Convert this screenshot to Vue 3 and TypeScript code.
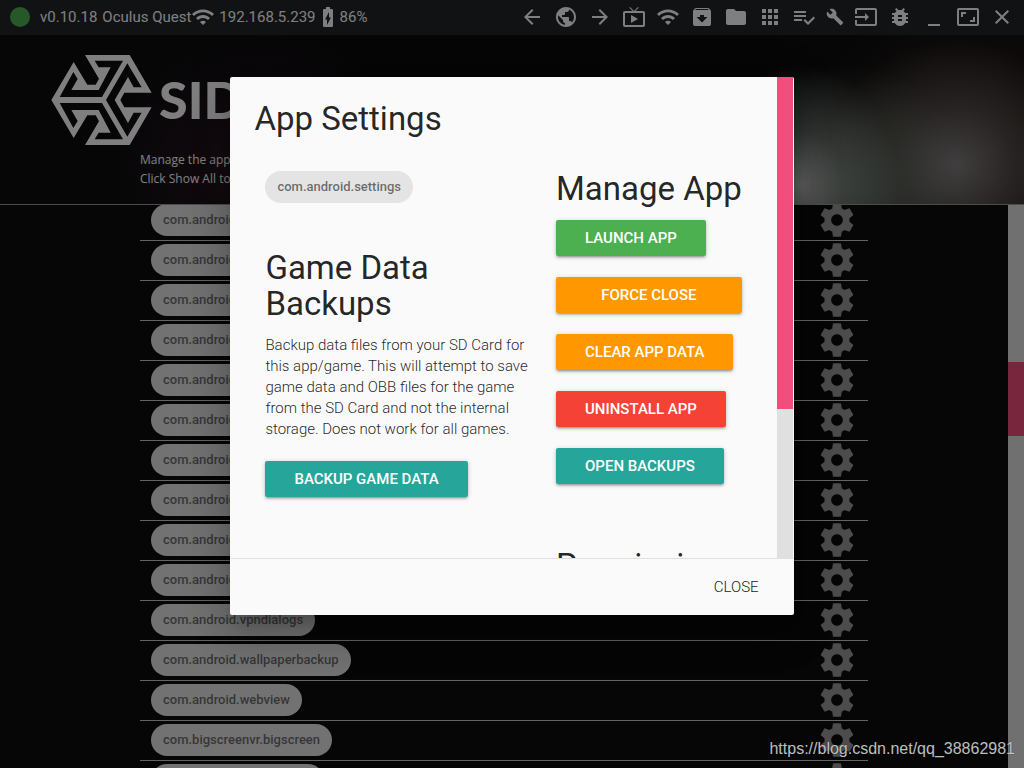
<script setup lang="ts">
interface BarIcon {
  name: string
  path: string
  small?: boolean
}
interface Action {
  label: string
  tone: string
  wide?: boolean
}

const wifi =
  'M1 9l2 2c4.97-4.97 13.03-4.97 18 0l2-2C16.93 2.93 7.08 2.93 1 9zm8 8l3 3 3-3c-1.65-1.66-4.34-1.66-6 0zm-4-4l2 2c2.76-2.76 7.24-2.76 10 0l2-2C15.14 9.14 8.87 9.14 5 13z'
const battery =
  'M15.67 4H14V2h-4v2H8.33C7.6 4 7 4.6 7 5.33v15.33C7 21.4 7.6 22 8.33 22h7.33c.74 0 1.34-.6 1.34-1.33V5.33C17 4.6 16.4 4 15.67 4zM11 20v-5.5H9L13 7v5.5h2L11 20z'
const gear =
  'M19.43 12.98c.04-.32.07-.64.07-.98s-.03-.66-.07-.98l2.11-1.65c.19-.15.24-.42.12-.64l-2-3.46c-.12-.22-.39-.3-.61-.22l-2.49 1c-.52-.4-1.08-.73-1.69-.98l-.38-2.65C14.46 2.18 14.25 2 14 2h-4c-.25 0-.46.18-.49.42l-.38 2.65c-.61.25-1.17.59-1.69.98l-2.49-1c-.23-.09-.49 0-.61.22l-2 3.46c-.13.22-.07.49.12.64l2.11 1.65c-.04.32-.07.65-.07.98s.03.66.07.98l-2.11 1.65c-.19.15-.24.42-.12.64l2 3.46c.12.22.39.3.61.22l2.49-1c.52.4 1.08.73 1.69.98l.38 2.65c.03.24.24.42.49.42h4c.25 0 .46-.18.49-.42l.38-2.65c.61-.25 1.17-.59 1.69-.98l2.49 1c.23.09.49 0 .61-.22l2-3.46c.12-.22.07-.49-.12-.64l-2.11-1.65zM12 15.5c-1.93 0-3.5-1.57-3.5-3.5s1.57-3.5 3.5-3.5 3.5 1.57 3.5 3.5-1.57 3.5-3.5 3.5z'

const barIcons: BarIcon[] = [
  { name: 'Back', path: 'M20 11H7.83l5.59-5.59L12 4l-8 8 8 8 1.41-1.41L7.83 13H20v-2z' },
  {
    name: 'Home',
    path: 'M12 2C6.48 2 2 6.48 2 12s4.48 10 10 10 10-4.48 10-10S17.52 2 12 2zm-1 17.93c-3.95-.49-7-3.85-7-7.93 0-.62.08-1.21.21-1.79L9 15v1c0 1.1.9 2 2 2v1.93zm6.9-2.54c-.26-.81-1-1.39-1.9-1.39h-1v-3c0-.55-.45-1-1-1H8v-2h2c.55 0 1-.45 1-1V7h2c1.1 0 2-.9 2-2v-.41c2.93 1.19 5 4.06 5 7.41 0 2.08-.8 3.97-2.1 5.39z',
  },
  { name: 'Forward', path: 'M12 4l-1.41 1.41L16.17 11H4v2h12.17l-5.58 5.59L12 20l8-8z' },
  {
    name: 'Stream',
    path: 'M21 6h-7.59l3.29-3.29L16 2l-4 4-4-4-.71.71L10.59 6H3c-1.1 0-2 .89-2 2v12c0 1.1.9 2 2 2h18c1.1 0 2-.9 2-2V8c0-1.11-.9-2-2-2zm0 14H3V8h18v12zM9 10v8l7-4z',
  },
  { name: 'Wireless', path: wifi },
  {
    name: 'Backups',
    path: 'M20.54 5.23l-1.39-1.68C18.88 3.21 18.47 3 18 3H6c-.47 0-.88.21-1.16.55L3.46 5.23C3.17 5.57 3 6.02 3 6.5V19c0 1.1.9 2 2 2h14c1.1 0 2-.9 2-2V6.5c0-.48-.17-.93-.46-1.27zM12 17.5L6.5 12H10v-2h4v2h3.5L12 17.5zM5.12 5l.81-1h12l.94 1H5.12z',
  },
  {
    name: 'Files',
    path: 'M10 4H4c-1.1 0-1.99.9-1.99 2L2 18c0 1.1.9 2 2 2h16c1.1 0 2-.9 2-2V8c0-1.1-.9-2-2-2h-8l-2-2z',
  },
  {
    name: 'Apps',
    path: 'M4 8h4V4H4v4zm6 12h4v-4h-4v4zm-6 0h4v-4H4v4zm0-6h4v-4H4v4zm6 0h4v-4h-4v4zm6-10v4h4V4h-4zm-6 4h4V4h-4v4zm6 6h4v-4h-4v4zm0 6h4v-4h-4v4z',
  },
  {
    name: 'Tasks',
    path: 'M14 10H2v2h12v-2zm0-4H2v2h12V6zM2 16h8v-2H2v2zm19.5-4.5L23 13l-6.99 7-4.51-4.5L13 14l3.01 3 5.49-5.5z',
  },
  {
    name: 'Tools',
    small: true,
    path: 'M22.7 19l-9.1-9.1c.9-2.3.4-5-1.5-6.9-2-2-5-2.4-7.4-1.3L9 6 6 9 1.6 4.7C.4 7.1.9 10.1 2.9 12.1c1.9 1.9 4.6 2.4 6.9 1.5l9.1 9.1c.4.4 1 .4 1.4 0l2.3-2.3c.5-.4.5-1.1.1-1.4z',
  },
  {
    name: 'Import',
    path: 'M21 3.01H3c-1.1 0-2 .9-2 2V9h2V4.99h18v14.03H3V15H1v4.01c0 1.1.9 1.98 2 1.98h18c1.1 0 2-.88 2-1.98v-14c0-1.11-.9-2-2-2zM11 16l4-4-4-4v3H1v2h10v3z',
  },
  {
    name: 'Debug',
    path: 'M20 8h-2.81c-.45-.78-1.07-1.45-1.82-1.96L17 4.41 15.59 3l-2.17 2.17C12.96 5.06 12.49 5 12 5c-.49 0-.96.06-1.41.17L8.41 3 7 4.41l1.62 1.63C7.88 6.55 7.26 7.22 6.81 8H4v2h2.09c-.05.33-.09.66-.09 1v1H4v2h2v1c0 .34.04.67.09 1H4v2h2.81c1.04 1.79 2.97 3 5.19 3s4.15-1.21 5.19-3H20v-2h-2.09c.05-.33.09-.66.09-1v-1h2v-2h-2v-1c0-.34-.04-.67-.09-1H20V8zm-6 8h-4v-2h4v2zm0-4h-4v-2h4v2z',
  },
  { name: 'Minimize', path: 'M6 19h12v2H6z' },
  {
    name: 'Maximize',
    path: 'M19 12h-2v3h-3v2h5v-5zM7 9h3V7H5v5h2V9zm14-6H3c-1.1 0-2 .9-2 2v14c0 1.1.9 2 2 2h18c1.1 0 2-.9 2-2V5c0-1.1-.9-2-2-2zm0 16.01H3V4.99h18v14.02z',
  },
  {
    name: 'Close window',
    path: 'M19 6.41L17.59 5 12 10.59 6.41 5 5 6.41 10.59 12 5 17.59 6.41 19 12 13.41 17.59 19 19 17.59 13.41 12z',
  },
]

const packages: string[] = [
  ...Array<string>(10).fill('com.android.settings'),
  'com.android.vpndialogs',
  'com.android.wallpaperbackup',
  'com.android.webview',
  'com.bigscreenvr.bigscreen',
  'com.android.settings.app',
]

const actions: Action[] = [
  { label: 'Launch App', tone: 'green' },
  { label: 'Force Close', tone: 'orange', wide: true },
  { label: 'Clear App Data', tone: 'orange' },
  { label: 'Uninstall App', tone: 'red' },
  { label: 'Open Backups', tone: 'teal' },
]
</script>

<template>
  <div class="shell">
    <header class="bar">
      <div class="status">
        <span class="dot"></span>
        <span class="version">v0.10.18</span>
        <span>Oculus Quest</span>
        <svg class="icon" viewBox="0 0 24 24"><path :d="wifi" /></svg>
        <span class="address">192.168.5.239</span>
        <svg class="icon" viewBox="0 0 24 24"><path :d="battery" /></svg>
        <span>86%</span>
      </div>
      <nav class="tools">
        <button v-for="i in barIcons" :key="i.name" type="button" class="tool" :aria-label="i.name">
          <svg class="icon" :class="{ small: i.small }" viewBox="0 0 24 24"><path :d="i.path" /></svg>
        </button>
      </nav>
    </header>

    <section class="hero">
      <div class="brand">
        <svg class="mark" viewBox="9 9 301 270">
          <path
            fill-rule="evenodd"
            d="M9 144L76 30 117 98H142L152 80 110 9H244L310 122H228L216 144 228 166H310L244 279H110L152 208 142 190H117L76 258Z
               M34 135H161L224 26H139L151 46H187L151 114H69L88 81 75 60Z
               M34 153H161L224 262H139L151 242H187L151 174H69L88 207 75 228Z
               M173 144L237 34 280 106H256L239 75 199 144 239 213 256 182H280L237 254Z"
          />
        </svg>
        <span class="wordmark">SIDEQUEST</span>
      </div>
      <p class="intro">Manage the apps<br />Click Show All to</p>
    </section>

    <main class="body">
      <div class="scroll">
        <ul class="list">
          <li v-for="(p, n) in packages" :key="n" class="row">
            <span class="chip">{{ p }}</span>
            <button type="button" class="gear" :aria-label="'Settings for ' + p">
              <svg viewBox="0 0 24 24"><path :d="gear" /></svg>
            </button>
          </li>
        </ul>
      </div>
      <div class="track"><div class="thumb"></div></div>
    </main>

    <div class="overlay">
      <div class="modal" role="dialog" aria-modal="true" aria-labelledby="dialog-title">
        <div class="modal-main">
          <div class="content">
            <h4 id="dialog-title">App Settings</h4>
            <div class="columns">
              <section class="col">
                <span class="chip">com.android.settings</span>
                <h4 class="backup-title">Game Data Backups</h4>
                <p class="copy">
                  Backup data files from your SD Card for this app/game. This will attempt to save game data and
                  OBB files for the game from the SD Card and not the internal storage. Does not work for all games.
                </p>
                <button type="button" class="btn teal">Backup Game Data</button>
              </section>
              <section class="col">
                <h4 class="manage">Manage App</h4>
                <div class="actions">
                  <button
                    v-for="a in actions"
                    :key="a.label"
                    type="button"
                    class="btn"
                    :class="[a.tone, { wide: a.wide }]"
                  >
                    {{ a.label }}
                  </button>
                </div>
                <h4>Permissions</h4>
              </section>
            </div>
          </div>
          <div class="modal-track"><div class="modal-thumb"></div></div>
        </div>
        <footer class="modal-foot">
          <button type="button" class="close">Close</button>
        </footer>
      </div>
    </div>
    <span class="credit">https://blog.csdn.net/qq_38862981</span>
  </div>
</template>

<style>
html,
body,
#app {
  height: 100%;
}
body {
  margin: 0;
  background: #0c0c0c;
}
</style>

<style scoped>
.shell,
.shell * {
  box-sizing: border-box;
}
.shell {
  position: relative;
  display: flex;
  flex-direction: column;
  height: 100%;
  overflow: hidden;
  background: #0c0c0c;
  font-family: Roboto, 'Liberation Sans', sans-serif;
  font-size: 15px;
}
button {
  margin: 0;
  padding: 0;
  border: 0;
  background: none;
  font: inherit;
  cursor: pointer;
}
h4 {
  margin: 0;
  font-size: 33px;
  line-height: 36px;
  font-weight: 400;
}

.bar {
  flex: none;
  display: flex;
  align-items: center;
  justify-content: space-between;
  height: 35px;
  padding: 0 10px 1px;
  background: #212529;
  color: #fff;
}
.status {
  display: flex;
  align-items: center;
  white-space: nowrap;
}
.dot {
  width: 20px;
  height: 20px;
  border-radius: 50%;
  background: #4cb050;
}
.version {
  margin: 0 5px 0 10px;
}
.address {
  margin-left: 4px;
}
.icon {
  display: block;
  width: 24px;
  height: 24px;
  fill: currentColor;
}
.icon.small {
  width: 18px;
  height: 18px;
}
.tools {
  display: flex;
  align-items: center;
  gap: 10px;
}
.tool {
  color: #fff;
}

.hero {
  flex: none;
  height: 170px;
  padding: 20px 51px 0;
  border-bottom: 1px solid #999;
  color: #fff;
  background:
    radial-gradient(ellipse 100px 120px at 800px 150px, rgba(200, 200, 200, 0.9) 0%, rgba(150, 155, 152, 0.5) 45%, rgba(90, 95, 90, 0) 100%),
    radial-gradient(ellipse 120px 120px at 850px 150px, rgba(115, 138, 118, 0.6) 0%, rgba(90, 105, 90, 0) 100%),
    radial-gradient(ellipse 130px 125px at 955px 130px, rgba(138, 134, 137, 0.9) 0%, rgba(112, 108, 108, 0.55) 45%, rgba(70, 60, 55, 0) 100%),
    radial-gradient(ellipse 180px 150px at 980px 110px, rgba(56, 36, 26, 0.8) 0%, rgba(20, 12, 8, 0) 100%),
    radial-gradient(ellipse 150px 130px at 260px 130px, #2c1822 0%, rgba(20, 12, 18, 0) 100%),
    #0d0d0f;
}
.brand {
  display: flex;
  align-items: flex-start;
  gap: 7px;
  height: 90px;
}
.mark {
  width: 101px;
  height: 90px;
  fill: #fff;
}
.wordmark {
  font-family: Lato, sans-serif;
  font-size: 52px;
  line-height: 88px;
  font-weight: 900;
}
.intro {
  margin: 5px 0 0 89px;
  font-family: 'Open Sans', 'Noto Sans', sans-serif;
  font-size: 12px;
  line-height: 19px;
}

.body {
  flex: 1;
  min-height: 0;
  display: flex;
}
.scroll {
  flex: 1;
  overflow: hidden;
}
.list {
  max-width: 728px;
  margin: -4px auto 0;
  padding: 0;
  list-style: none;
}
.row {
  display: flex;
  align-items: center;
  justify-content: space-between;
  height: 40px;
  padding: 0 11px 1px;
  border-bottom: 1px solid #c8c8c8;
}
.chip {
  display: inline-block;
  height: 32px;
  padding: 0 12px;
  border-radius: 16px;
  background: #e4e4e4;
  color: rgba(0, 0, 0, 0.55);
  font-size: 13px;
  line-height: 32px;
  font-weight: 500;
}
.gear svg {
  display: block;
  width: 40px;
  height: 40px;
  fill: #989898;
}
.track {
  display: flow-root;
  width: 16px;
  background: #e0e0e0;
}
.thumb {
  height: 74px;
  margin-top: 157px;
  background: #ee4c7c;
}

.overlay {
  position: absolute;
  inset: 0;
  background: rgba(0, 0, 0, 0.5);
}
.modal {
  display: flex;
  flex-direction: column;
  width: 55%;
  height: 70%;
  margin: 77px auto 0;
  border-radius: 2px;
  overflow: hidden;
  background: #fafafa;
  color: rgba(0, 0, 0, 0.87);
  box-shadow:
    0 24px 38px 3px rgba(0, 0, 0, 0.14),
    0 9px 46px 8px rgba(0, 0, 0, 0.12),
    0 11px 15px -7px rgba(0, 0, 0, 0.2);
}
.modal-main {
  flex: 1;
  min-height: 0;
  display: flex;
}
.content {
  flex: 1;
  overflow: hidden;
  padding: 24px;
}
.columns {
  display: grid;
  grid-template-columns: 7fr 5fr;
  margin-top: 34px;
}
.col {
  min-width: 0;
  padding: 0 11px;
}
.backup-title {
  margin-top: 47px;
}
.manage {
  white-space: nowrap;
}
.copy {
  margin: 13px 0 21px;
  font-size: 15px;
  line-height: 21px;
  font-weight: 300;
}
.actions {
  display: flex;
  flex-direction: column;
  align-items: flex-start;
  gap: 21px;
  margin: 13px 0 64px;
}
.btn {
  height: 36px;
  padding: 0 29px;
  border-radius: 2px;
  color: #fff;
  font-size: 15px;
  font-weight: 500;
  line-height: 36px;
  text-transform: uppercase;
  white-space: nowrap;
  box-shadow:
    0 2px 2px 0 rgba(0, 0, 0, 0.14),
    0 3px 1px -2px rgba(0, 0, 0, 0.12),
    0 1px 5px 0 rgba(0, 0, 0, 0.2);
}
.wide {
  width: 100%;
}
.green {
  background: #4caf50;
}
.orange {
  background: #ff9800;
}
.red {
  background: #f44336;
}
.teal {
  background: #26a69a;
}
.modal-track {
  width: 16px;
  margin-right: 1px;
  background: #e0e0e0;
}
.modal-thumb {
  height: 69%;
  background: #f04e7c;
}
.modal-foot {
  flex: none;
  display: flex;
  align-items: center;
  justify-content: flex-end;
  height: 57px;
  padding: 0 35px;
  border-top: 1px solid #e0e0e0;
}
.close {
  color: #222;
  font-size: 15px;
  line-height: 36px;
  font-weight: 300;
  text-transform: uppercase;
}
.credit {
  position: absolute;
  right: 9px;
  bottom: 10px;
  color: rgba(255, 255, 255, 0.75);
  font-family: 'Liberation Sans', Arial, sans-serif;
  font-size: 16px;
  line-height: 19px;
  text-shadow: 0 0 1px #000;
}
</style>
